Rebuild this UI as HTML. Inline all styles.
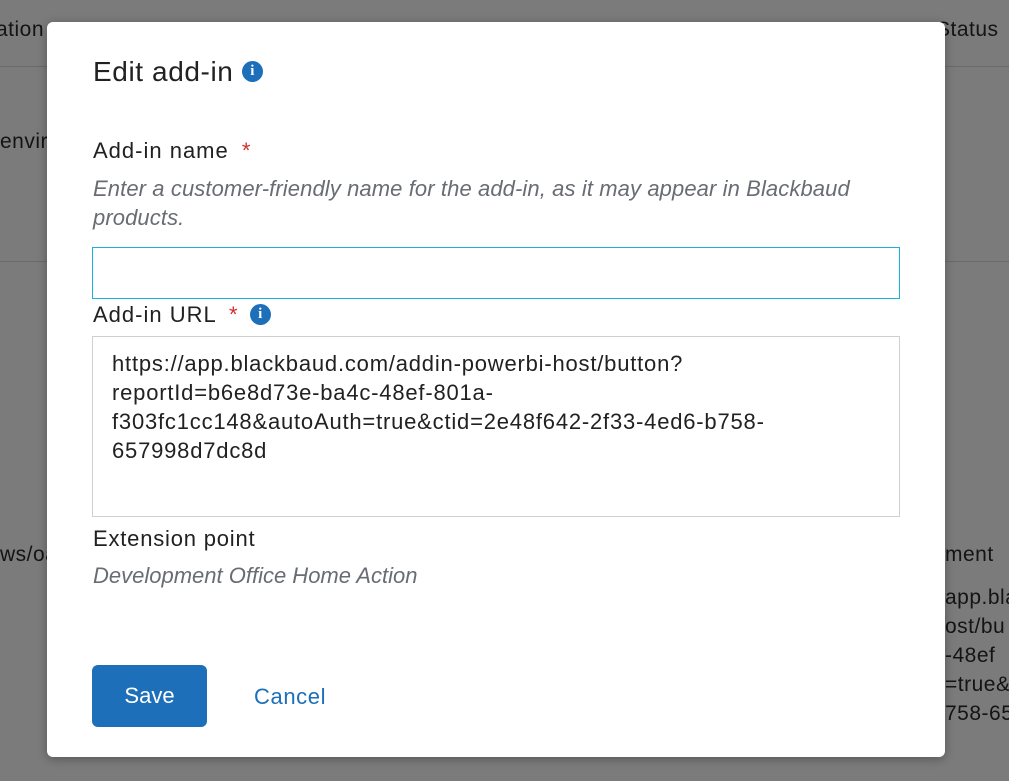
<!DOCTYPE html>
<html><head><meta charset="utf-8"><style>
html,body{margin:0;padding:0;width:1009px;height:781px;overflow:hidden;background:#7b7b7b;font-family:"Liberation Sans",sans-serif;}
.bg{position:absolute;color:#141414;font-size:21px;white-space:nowrap;letter-spacing:0.5px;}
.ln{position:absolute;height:1px;background:#6a6a6a;}
.modal{position:absolute;left:47px;top:22px;width:898px;height:735px;background:#fff;border-radius:6px;box-shadow:0 2px 10px rgba(0,0,0,.3);}
.t{position:absolute;white-space:nowrap;color:#212121;}
.info{display:inline-block;width:21px;height:21px;border-radius:50%;background:#1c6fb8;color:#fff;font:bold 15px/21px "Liberation Serif",serif;text-align:center;vertical-align:middle;letter-spacing:0;}
.req{color:#d32f2f;}
</style></head><body>
<div class="bg" style="left:-4px;top:18px">ation</div>
<div class="bg" style="left:936px;top:18px">Status</div>
<div class="ln" style="left:0;top:66px;width:1009px"></div>
<div class="bg" style="left:0;top:130px">envir</div>
<div class="ln" style="left:0;top:261px;width:1009px"></div>
<div class="bg" style="left:0;top:543px">ws/oa</div>
<div class="bg" style="left:945px;top:543px">ment</div>
<div class="bg" style="left:945px;top:583px;line-height:29px">app.bla<br>ost/bu<br>-48ef<br>=true&amp;<br>758-65</div>
<div class="modal">
 <div class="t" style="left:46px;top:34px;font-size:28px;letter-spacing:0.6px">Edit add-in <span class="info" style="margin-top:-4px">i</span></div>
 <div class="t" style="left:46px;top:116px;font-size:22px;letter-spacing:1px">Add-in name <span class="req" style="margin-left:6px">*</span></div>
 <div class="t" style="left:46px;top:152px;font-size:22px;font-style:italic;color:#686c73;line-height:29px;white-space:normal;width:800px;letter-spacing:0.1px">Enter a customer-friendly name for the add-in, as it may appear in Blackbaud products.</div>
 <div style="position:absolute;left:45px;top:225px;width:806px;height:50px;border:1px solid #1ab0e0;"></div>
 <div class="t" style="left:46px;top:280px;font-size:22px;letter-spacing:1px">Add-in URL <span class="req" style="margin-left:6px">*</span> <span class="info" style="margin-left:4px;margin-top:-4px">i</span></div>
 <div style="position:absolute;left:45px;top:314px;width:806px;height:179px;border:1px solid #cfcfcf;"></div>
 <div class="t" style="left:65px;top:327px;font-size:22px;line-height:29px;letter-spacing:0.8px">https://app.blackbaud.com/addin-powerbi-host/button?<br>reportId=b6e8d73e-ba4c-48ef-801a-<br>f303fc1cc148&amp;autoAuth=true&amp;ctid=2e48f642-2f33-4ed6-b758-<br>657998d7dc8d</div>
 <div class="t" style="left:46px;top:504px;font-size:22px;letter-spacing:0.8px">Extension point</div>
 <div class="t" style="left:46px;top:541px;font-size:22px;font-style:italic;color:#686c73;">Development Office Home Action</div>
 <div style="position:absolute;left:45px;top:643px;width:115px;height:62px;background:#1c6fb8;border-radius:6px;color:#fff;font-size:22px;line-height:62px;text-align:center;">Save</div>
 <div class="t" style="left:207px;top:662px;font-size:22px;color:#1c6fb8;letter-spacing:0.6px">Cancel</div>
</div>
</body></html>
